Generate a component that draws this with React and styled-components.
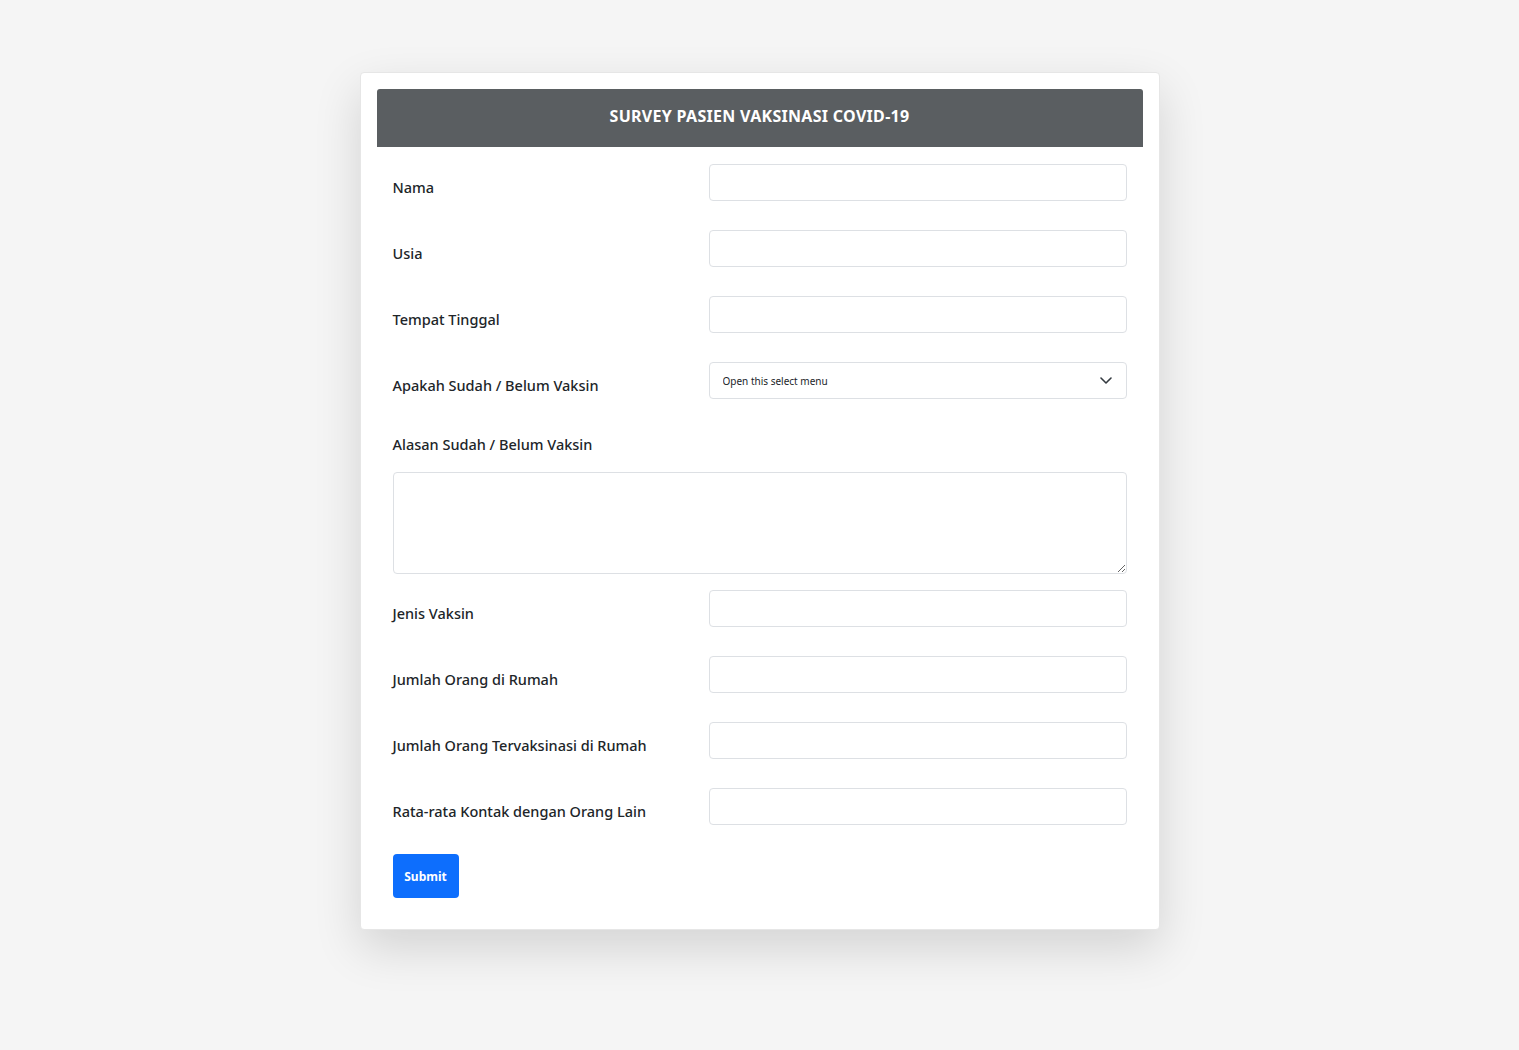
import React from 'react';
import styled, { createGlobalStyle } from 'styled-components';

const GlobalStyle = createGlobalStyle`
  * {
    box-sizing: border-box;
  }
  body {
    margin: 0;
    background-color: #f5f5f5;
    font-family: 'Noto Sans', 'Open Sans', sans-serif;
    color: #212529;
  }
`;

const Page = styled.div`
  min-height: 1050px;
  padding-top: 72px;
  display: flex;
  justify-content: center;
  align-items: flex-start;
`;

const Card = styled.div`
  width: 800px;
  background: #fff;
  border: 1px solid #e6e6e6;
  border-radius: 4px;
  padding: 16px 16px 31px;
  box-shadow: 0 18px 48px rgba(0, 0, 0, 0.14);
`;

const Header = styled.div`
  height: 58px;
  padding-bottom: 5px;
  background-color: #5a5e61;
  border-radius: 3px 3px 0 0;
  display: flex;
  align-items: center;
  justify-content: center;
`;

const Title = styled.h1`
  margin: 0;
  color: #fff;
  font-size: 16px;
  font-weight: 700;
  letter-spacing: 0.3px;
`;

const Form = styled.form`
  padding: 17px 16px 0;
`;

const Row = styled.div`
  display: grid;
  grid-template-columns: 316px 1fr;
  margin-bottom: 29px;
`;

const Label = styled.label`
  display: block;
  padding-top: ${(p) => (p.$stacked ? '8px' : '15px')};
  font-size: 14.5px;
  font-weight: 500;
  line-height: 17px;
`;

const Input = styled.input`
  width: 100%;
  height: 37px;
  padding: 6px 12px;
  border: 1px solid #dde0e4;
  border-radius: 4px;
  font-family: inherit;
  font-size: 13px;
  background: #fff;
  &:focus {
    outline: none;
    border-color: #86b7fe;
  }
`;

const SelectWrap = styled.div`
  position: relative;
  height: 37px;
`;

const Select = styled.select`
  width: 100%;
  height: 37px;
  padding: 0 36px 0 13px;
  border: 1px solid #dde0e4;
  border-radius: 4px;
  font-family: inherit;
  font-size: 10px;
  color: #212529;
  background: #fff;
  appearance: none;
  &:focus {
    outline: none;
  }
`;

const Chevron = styled.svg`
  position: absolute;
  right: 15px;
  top: 13px;
  pointer-events: none;
`;

const Block = styled.div`
  margin-bottom: 16px;
`;

const TextArea = styled.textarea`
  display: block;
  width: 100%;
  height: 102px;
  margin-top: 19px;
  padding: 6px 12px;
  border: 1px solid #dde0e4;
  border-radius: 4px;
  font-family: inherit;
  font-size: 13px;
  &:focus {
    outline: none;
  }
`;

const SubmitButton = styled.button`
  width: 66px;
  height: 44px;
  background-color: #0d6efd;
  color: #fff;
  border: none;
  border-radius: 4px;
  font-family: inherit;
  font-size: 12px;
  font-weight: 700;
  cursor: pointer;
`;

const fields = [
  { id: 'nama', label: 'Nama' },
  { id: 'usia', label: 'Usia' },
  { id: 'tempat', label: 'Tempat Tinggal' },
];

const moreFields = [
  { id: 'jenis', label: 'Jenis Vaksin' },
  { id: 'jumlah', label: 'Jumlah Orang di Rumah' },
  { id: 'tervaksin', label: 'Jumlah Orang Tervaksinasi di Rumah' },
  { id: 'kontak', label: 'Rata-rata Kontak dengan Orang Lain' },
];

const FieldRow = ({ id, label }) => (
  <Row>
    <Label htmlFor={id}>{label}</Label>
    <Input id={id} type="text" />
  </Row>
);

const App = () => (
  <>
    <GlobalStyle />
    <Page>
      <Card>
        <Header>
          <Title>SURVEY PASIEN VAKSINASI COVID-19</Title>
        </Header>
        <Form onSubmit={(e) => e.preventDefault()}>
          {fields.map((f) => (
            <FieldRow key={f.id} {...f} />
          ))}
          <Row>
            <Label htmlFor="status">Apakah Sudah / Belum Vaksin</Label>
            <SelectWrap>
              <Select id="status" defaultValue="">
                <option value="">Open this select menu</option>
                <option value="sudah">Sudah</option>
                <option value="belum">Belum</option>
              </Select>
              <Chevron width="12" height="10" viewBox="0 0 12 10">
                <path d="M1 3l5 5 5-5" fill="none" stroke="#343a40" strokeWidth="1.6" strokeLinecap="round" strokeLinejoin="round" />
              </Chevron>
            </SelectWrap>
          </Row>
          <Block>
            <Label htmlFor="alasan" $stacked>Alasan Sudah / Belum Vaksin</Label>
            <TextArea id="alasan" />
          </Block>
          {moreFields.map((f) => (
            <FieldRow key={f.id} {...f} />
          ))}
          <SubmitButton type="submit">Submit</SubmitButton>
        </Form>
      </Card>
    </Page>
  </>
);

export default App;
